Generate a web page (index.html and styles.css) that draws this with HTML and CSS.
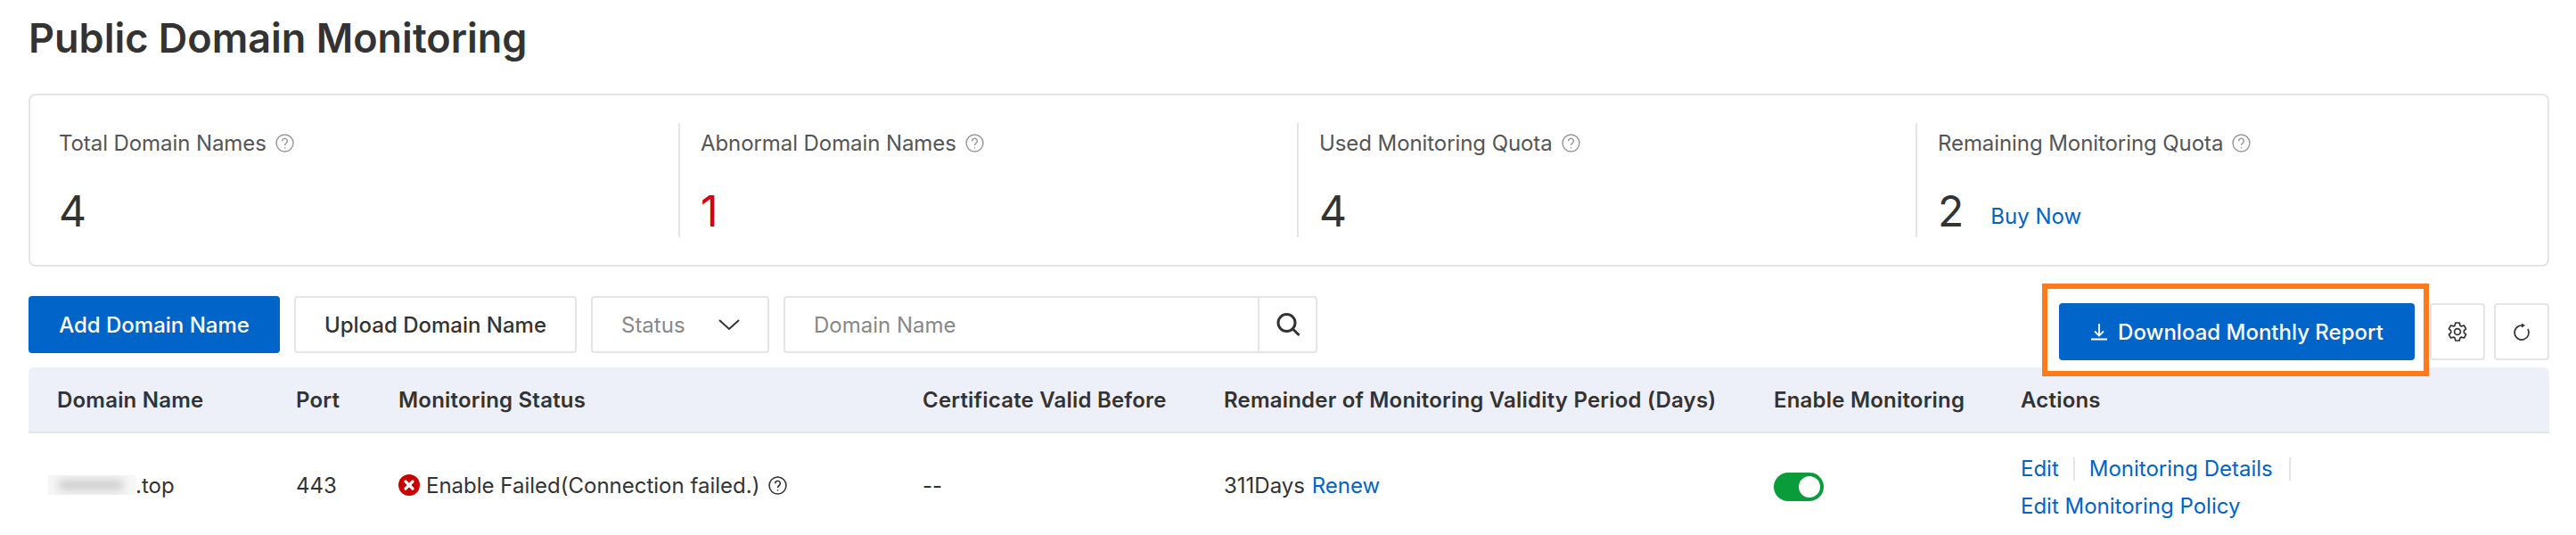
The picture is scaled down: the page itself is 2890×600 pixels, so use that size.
FILE: index.html
```html
<!DOCTYPE html>
<html lang="en">
<head>
<meta charset="utf-8">
<title>Public Domain Monitoring</title>
<link rel="stylesheet" href="styles.css">
</head>
<body>
<main class="page">
  <h1 class="title">Public Domain Monitoring</h1>
  <section class="stats">
    <div class="stat stat-1">
      <div class="stat-label">Total Domain Names <svg class="help" viewBox="0 0 20 20"><circle cx="10" cy="10" r="9"/><path d="M7.3 7.8a2.7 2.7 0 1 1 4.2 2.2c-1 .7-1.5 1.1-1.5 2.4"/><circle class="dot" cx="10" cy="15" r=".8"/></svg></div>
      <div class="stat-value">4</div>
    </div>
    <div class="stat stat-2">
      <div class="stat-label">Abnormal Domain Names <svg class="help" viewBox="0 0 20 20"><circle cx="10" cy="10" r="9"/><path d="M7.3 7.8a2.7 2.7 0 1 1 4.2 2.2c-1 .7-1.5 1.1-1.5 2.4"/><circle class="dot" cx="10" cy="15" r=".8"/></svg></div>
      <div class="stat-value red">1</div>
    </div>
    <div class="stat stat-3">
      <div class="stat-label">Used Monitoring Quota <svg class="help" viewBox="0 0 20 20"><circle cx="10" cy="10" r="9"/><path d="M7.3 7.8a2.7 2.7 0 1 1 4.2 2.2c-1 .7-1.5 1.1-1.5 2.4"/><circle class="dot" cx="10" cy="15" r=".8"/></svg></div>
      <div class="stat-value">4</div>
    </div>
    <div class="stat stat-4">
      <div class="stat-label">Remaining Monitoring Quota <svg class="help" viewBox="0 0 20 20"><circle cx="10" cy="10" r="9"/><path d="M7.3 7.8a2.7 2.7 0 1 1 4.2 2.2c-1 .7-1.5 1.1-1.5 2.4"/><circle class="dot" cx="10" cy="15" r=".8"/></svg></div>
      <div class="stat-value">2<a class="link buy">Buy Now</a></div>
    </div>
  </section>
  <section class="toolbar">
    <div class="tools-left">
      <button class="btn primary add">Add Domain Name</button>
      <button class="btn upload">Upload Domain Name</button>
      <div class="select">Status<svg class="chev" viewBox="0 0 26 14"><path d="M2 2l11 10L24 2"/></svg></div>
      <div class="search">
        <div class="search-input">Domain Name</div>
        <div class="search-btn"><svg viewBox="0 0 28 28"><circle cx="12.5" cy="12" r="9.5"/><path d="M19.5 19l7 7"/></svg></div>
      </div>
    </div>
    <div class="tools-right">
      <div class="highlight">
        <button class="btn primary download"><svg class="dl" viewBox="0 0 20 20"><path d="M10 1v13M5 9.500l5 5 5-5M1 18.500h18"/></svg>Download Monthly Report</button>
      </div>
      <button class="btn icon"><svg viewBox="0 0 24 24"><path d="M9.800 2h4.400l.7 3 1.500.9 3-.9 2.200 3.900-2.300 2v2.200l2.300 2-2.200 3.900-3-.9-1.500.9-.7 3H9.800l-.7-3-1.500-.9-3 .9-2.200-3.900 2.300-2v-2.200l-2.300-2 2.200-3.900 3 .9 1.500-.9z"/><circle cx="12" cy="12" r="3.400"/></svg></button>
      <button class="btn icon"><svg viewBox="0 0 24 24"><path d="M12 5A8 8 0 1 0 19 9"/><path class="solid" d="M12 2.500l4 2.500-4 2.500z"/></svg></button>
    </div>
  </section>
  <section class="table">
    <div class="row head">
      <div class="c c1">Domain Name</div>
      <div class="c c2">Port</div>
      <div class="c c3">Monitoring Status</div>
      <div class="c c4">Certificate Valid Before</div>
      <div class="c c5">Remainder of Monitoring Validity Period (Days)</div>
      <div class="c c6">Enable Monitoring</div>
      <div class="c c7">Actions</div>
    </div>
    <div class="row body">
      <div class="c c1"><span class="mask"><span class="smear"></span></span>.top</div>
      <div class="c c2">443</div>
      <div class="c c3 status">
        <svg class="err" viewBox="0 0 24 24"><circle cx="12" cy="12" r="12"/><path d="M8 8l8 8M16 8l-8 8"/></svg>
        <span class="status-text">Enable Failed(Connection failed.)</span>
        <svg class="help dark" viewBox="0 0 20 20"><circle cx="10" cy="10" r="9"/><path d="M7.300 7.800a2.700 2.700 0 1 1 4.200 2.200c-1 .7-1.500 1.100-1.500 2.400"/><circle class="dot" cx="10" cy="15" r=".8"/></svg>
      </div>
      <div class="c c4">--</div>
      <div class="c c5">311Days <a class="link renew">Renew</a></div>
      <div class="c c6"><span class="toggle"><span class="knob"></span></span></div>
      <div class="c c7 actions">
        <div class="action-line"><a class="link act">Edit</a><a class="link act">Monitoring Details</a></div>
        <div class="action-line"><a class="link">Edit Monitoring Policy</a></div>
      </div>
    </div>
  </section>
</main>
</body>
</html>
```

FILE: styles.css
```css
* { box-sizing: border-box; }
html, body { margin: 0; background: #fff; }
body { width: 2890px; height: 600px; overflow: hidden; font-family: Inter, "Liberation Sans", sans-serif; color: #333; }
.page { padding: 0 30px 0 32px; }
.title { margin: 0; height: 105px; padding-top: 16px; font-size: 45px; line-height: 54px; font-weight: 600; color: #333; }

.stats { display: flex; height: 194px; border: 2px solid #e5e5e5; border-radius: 8px; padding: 31px 0 0; }
.stat { height: 128px; padding: 2px 0 0 23px; border-left: 2px solid #e5e5e5; }
.stat-1 { width: 727px; border-left: 0; padding-left: 32px; }
.stat-2 { width: 694px; }
.stat-3 { width: 694px; }
.stat-4 { flex: 1; }
.stat-label { display: flex; align-items: center; gap: 10px; height: 40px; font-size: 24px; letter-spacing: -.08px; color: #555; }
.stat-value { margin-top: 27px; font-size: 48px; line-height: 60px; color: #333; }
.red { color: #d4000f; }
.help { width: 21px; height: 21px; fill: none; stroke: #999; stroke-width: 1.4; flex: none; }
.help .dot { fill: #999; stroke: none; }
.help.dark { stroke: #333; margin-left: 3px; stroke-width: 1.500; }
.help.dark .dot { fill: #333; }
.link { color: #0064c8; }
.buy { margin-left: 30px; font-size: 24px; vertical-align: 3px; }

.toolbar { display: flex; justify-content: space-between; align-items: flex-start; height: 64px; margin: 33px 0 16px; }
.tools-left { display: flex; gap: 16px; }
.tools-right { display: flex; align-items: flex-start; }
.btn { height: 64px; border-radius: 4px; border: 2px solid #e5e5e5; background: #fff; color: #333; font-family: inherit; font-size: 24px; font-weight: 500; padding: 0; display: flex; align-items: center; justify-content: center; }
.primary { background: #0064c8; border: 0; color: #fff; }
.add { width: 282px; }
.upload { width: 317px; }
.select { width: 200px; height: 64px; border: 2px solid #e5e5e5; border-radius: 4px; display: flex; align-items: center; justify-content: space-between; padding: 0 30px 0 32px; font-size: 24px; color: #888; }
.chev { width: 26px; height: 14px; fill: none; stroke: #333; stroke-width: 2; }
.search { display: flex; width: 599px; height: 64px; border: 2px solid #e5e5e5; border-radius: 4px; }
.search-input { flex: 1; display: flex; align-items: center; padding-left: 32px; font-size: 24px; color: #888; }
.search-btn { width: 65px; border-left: 2px solid #e5e5e5; display: flex; align-items: center; justify-content: center; }
.search-btn svg { width: 28px; height: 28px; fill: none; stroke: #333; stroke-width: 3; }
.highlight { position: relative; z-index: 1; margin: -14px 1px -26px 0; padding: 16px 10px 12px 13px; border: 6px solid #ff7a1a; background: #fff; }
.download { width: 399px; margin: 0; }
.dl { width: 20px; height: 20px; margin-right: 11px; fill: none; stroke: #fff; stroke-width: 1.8; }
.icon { width: 62px; margin-top: 8px; }
.icon + .icon { margin-left: 10px; }
.icon svg { width: 24px; height: 24px; fill: none; stroke: #333; stroke-width: 1.7; stroke-linejoin: round; }
.icon svg .solid { fill: #333; stroke: none; }

.table { font-size: 24px; }
.row { display: grid; grid-template-columns: 268px 115px 588px 338px 617px 277px 1fr; align-items: center; padding-left: 32px; }
.head { height: 74px; background: #edf0f9; border-bottom: 2px solid #e5e5e5; border-radius: 6px 6px 0 0; font-weight: 600; letter-spacing: .2px; }
.body { height: 116px; }
.c1 { display: flex; align-items: center; }
.mask { width: 98px; height: 22px; margin-left: -10px; overflow: hidden; background: #f6f6f6; display: block; }
.smear { display: block; width: 72px; height: 12px; margin: 5px 12px; background: #cfcfcf; filter: blur(5px); }
.status { display: flex; align-items: center; gap: 7px; }
.err { width: 24px; height: 24px; flex: none; }
.err circle { fill: #c80000; }
.err path { stroke: #fff; stroke-width: 3.2; stroke-linecap: round; }
.renew { margin-left: 1px; }
.toggle { display: flex; justify-content: flex-end; align-items: center; width: 56px; height: 32px; margin-top: 4px; border-radius: 16px; background: #0a9c3a; padding-right: 4px; }
.knob { display: block; width: 24px; height: 24px; border-radius: 50%; background: #fff; }
.actions { display: flex; flex-direction: column; gap: 11px; margin-top: 5px; }
.action-line { display: flex; align-items: center; height: 30px; }
.act { padding-right: 18px; margin-right: 18px; border-right: 2px solid #e5e5e5; height: 26px; line-height: 26px; }
.act:first-child { padding-right: 16px; margin-right: 16px; }
```
